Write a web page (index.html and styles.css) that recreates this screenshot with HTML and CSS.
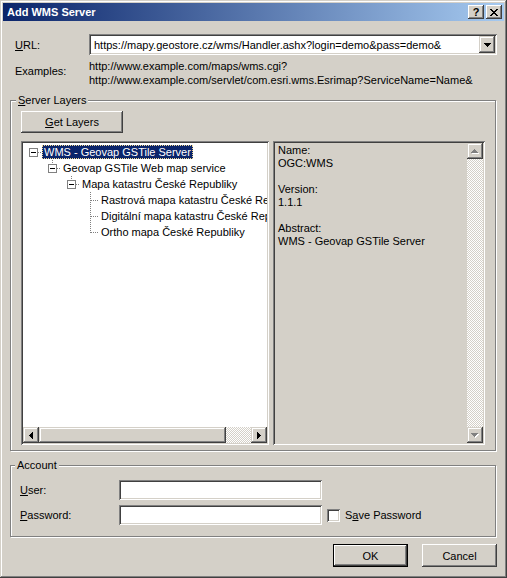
FILE: index.html
```html
<!DOCTYPE html>
<html>
<head>
<meta charset="utf-8">
<link rel="stylesheet" href="styles.css">
</head>
<body>
<div class="window">
  <div class="titlebar">
    <span class="title">Add WMS Server</span>
    <div class="tbuttons">
      <span class="tbtn help">?</span>
      <span class="tbtn"><svg width="8" height="7" viewBox="0 0 8 7" shape-rendering="crispEdges"><path d="M0 0h2v1h1v1h2v-1h1v-1h2v1h-1v1h-1v1h-1v1h1v1h1v1h1v1h-2v-1h-1v-1h-2v1h-1v1h-2v-1h1v-1h1v-1h1v-1h-1v-1h-1v-1h-1z" fill="#000"/></svg></span>
    </div>
  </div>
  <div class="client">
    <div class="url-row">
      <span class="lbl"><u>U</u>RL:</span>
      <div class="combo">
        <span class="combo-text">https://mapy.geostore.cz/wms/Handler.ashx?login=demo&amp;pass=demo&amp;</span>
        <span class="sbtn"><svg width="7" height="4" viewBox="0 0 7 4" shape-rendering="crispEdges"><path d="M0 0h7v1h-1v1h-1v1h-1v1h-1v-1h-1v-1h-1v-1h-1z" fill="#000"/></svg></span>
      </div>
    </div>
    <div class="examples">
      <span class="lbl ex-lbl">Examples:</span>
      <div class="ex-lines">
        <div>http://www.example.com/maps/wms.cgi?</div>
        <div>http://www.example.com/servlet/com.esri.wms.Esrimap?ServiceName=Name&amp;</div>
      </div>
    </div>

    <fieldset class="group layers">
      <legend><u>S</u>erver Layers</legend>
      <button class="btn get"><u>G</u>et Layers</button>
      <div class="panels">
        <div class="tree">
          <div class="tree-body">
            <div class="node l0">
              <svg class="conn" width="13" height="16" viewBox="0 0 13 16" shape-rendering="crispEdges"><rect x="0.5" y="4.5" width="8" height="8" fill="#fff" stroke="#808080"/><path d="M2 8.5h5" stroke="#000"/><path d="M9 8.5h4" stroke="#808080" stroke-dasharray="1 1"/></svg>
              <span class="label sel">WMS - Geovap GSTile Server</span>
            </div>
            <div class="node l1">
              <svg class="conn" width="13" height="16" viewBox="0 0 13 16" shape-rendering="crispEdges"><path d="M4.5 0v4" stroke="#808080" stroke-dasharray="1 1"/><rect x="0.5" y="4.5" width="8" height="8" fill="#fff" stroke="#808080"/><path d="M2 8.5h5" stroke="#000"/><path d="M9 8.5h4" stroke="#808080" stroke-dasharray="1 1"/></svg>
              <span class="label">Geovap GSTile Web map service</span>
            </div>
            <div class="node l2">
              <svg class="conn" width="13" height="16" viewBox="0 0 13 16" shape-rendering="crispEdges"><path d="M4.5 0v4" stroke="#808080" stroke-dasharray="1 1"/><rect x="0.5" y="4.5" width="8" height="8" fill="#fff" stroke="#808080"/><path d="M2 8.5h5" stroke="#000"/><path d="M9 8.5h4" stroke="#808080" stroke-dasharray="1 1"/></svg>
              <span class="label">Mapa katastru České Republiky</span>
            </div>
            <div class="node l3">
              <svg class="conn" width="13" height="16" viewBox="0 0 13 16" shape-rendering="crispEdges"><path d="M4.5 0v16M5 8.5h8" stroke="#808080" stroke-dasharray="1 1"/></svg>
              <span class="label">Rastrová mapa katastru České Republiky</span>
            </div>
            <div class="node l3">
              <svg class="conn" width="13" height="16" viewBox="0 0 13 16" shape-rendering="crispEdges"><path d="M4.5 0v16M5 8.5h8" stroke="#808080" stroke-dasharray="1 1"/></svg>
              <span class="label">Digitální mapa katastru České Republiky</span>
            </div>
            <div class="node l3">
              <svg class="conn" width="13" height="16" viewBox="0 0 13 16" shape-rendering="crispEdges"><path d="M4.5 0v9M5 8.5h8" stroke="#808080" stroke-dasharray="1 1"/></svg>
              <span class="label">Ortho mapa České Republiky</span>
            </div>
          </div>
          <div class="hscroll">
            <span class="sbtn"><svg width="4" height="7" viewBox="0 0 4 7" shape-rendering="crispEdges"><path d="M0 3h1v-1h1v-1h1v-1h1v7h-1v-1h-1v-1h-1v-1h-1z" fill="#000"/></svg></span>
            <span class="thumb-h"></span>
            <span class="track"></span>
            <span class="sbtn"><svg width="4" height="7" viewBox="0 0 4 7" shape-rendering="crispEdges"><path d="M0 0h1v1h1v1h1v1h1v1h-1v1h-1v1h-1v1h-1z" fill="#000"/></svg></span>
          </div>
        </div>
        <div class="info">
          <div class="info-text">
            <div>Name:</div>
            <div>OGC:WMS</div>
            <div class="blank"></div>
            <div>Version:</div>
            <div>1.1.1</div>
            <div class="blank"></div>
            <div>Abstract:</div>
            <div>WMS - Geovap GSTile Server</div>
          </div>
          <div class="vscroll">
            <span class="sbtn"><svg width="8" height="5" viewBox="0 0 8 5" shape-rendering="crispEdges"><path d="M4 1h1v1h1v1h1v1h1v1h-7v-1h1v-1h1v-1h1z" fill="#fff"/><path d="M3 0h1v1h1v1h1v1h1v1h-7v-1h1v-1h1v-1h1z" fill="#808080"/></svg></span>
            <span class="track"></span>
            <span class="sbtn"><svg width="8" height="5" viewBox="0 0 8 5" shape-rendering="crispEdges"><path d="M1 1h7v1h-1v1h-1v1h-1v1h-1v-1h-1v-1h-1v-1h-1z" fill="#fff"/><path d="M0 0h7v1h-1v1h-1v1h-1v1h-1v-1h-1v-1h-1v-1h-1z" fill="#808080"/></svg></span>
          </div>
        </div>
      </div>
    </fieldset>

    <fieldset class="group account">
      <legend>Account</legend>
      <div class="field-row">
        <span class="flbl"><u>U</u>ser:</span>
        <span class="input"></span>
      </div>
      <div class="field-row">
        <span class="flbl"><u>P</u>assword:</span>
        <span class="input"></span>
        <span class="check"></span>
        <span class="check-lbl">S<u>a</u>ve Password</span>
      </div>
    </fieldset>

    <div class="actions">
      <button class="btn dlg default">OK</button>
      <button class="btn dlg">Cancel</button>
    </div>
  </div>
</div>
</body>
</html>
```

FILE: styles.css
```css
* { box-sizing: border-box; }
html, body { margin: 0; padding: 0; }
body {
  font-family: "Liberation Sans", Arial, sans-serif;
  font-size: 11px;
  color: #000;
  background: #d4d0c8;
  width: 507px;
  height: 578px;
  overflow: hidden;
}
u { text-decoration: underline; text-underline-offset: 1px; }

.window {
  width: 507px;
  height: 578px;
  background: #d4d0c8;
  padding: 3px;
  display: flex;
  flex-direction: column;
  box-shadow: inset -1px -1px #404040, inset 1px 1px #d4d0c8, inset -2px -2px #808080, inset 2px 2px #fff;
}

.titlebar {
  height: 18px;
  flex: none;
  display: flex;
  align-items: center;
  background: linear-gradient(to right, #0a246a, #a6caf0);
  padding: 0 2px;
}
.title {
  flex: 1;
  color: #fff;
  font-weight: bold;
  font-size: 11px;
  padding-left: 2px;
}
.tbuttons { display: flex; gap: 2px; }
.tbtn {
  width: 16px;
  height: 14px;
  background: #d4d0c8;
  display: flex;
  align-items: center;
  justify-content: center;
  box-shadow: inset -1px -1px #404040, inset 1px 1px #fff, inset -2px -2px #808080, inset 2px 2px #d4d0c8;
}
.tbtn.help { font-weight: bold; font-size: 11px; line-height: 14px; }

.client {
  flex: 1;
  display: flex;
  flex-direction: column;
  padding: 13px 7px 0 7px;
}

.raised {
  box-shadow: inset -1px -1px #404040, inset 1px 1px #fff, inset -2px -2px #808080, inset 2px 2px #d4d0c8;
}

.url-row { display: flex; align-items: center; height: 21px; }
.lbl { width: 79px; padding-left: 5px; flex: none; }
.combo {
  flex: 1;
  height: 21px;
  background: #fff;
  display: flex;
  align-items: center;
  padding: 2px;
  box-shadow: inset 1px 1px #808080, inset -1px -1px #fff, inset 2px 2px #404040, inset -2px -2px #d4d0c8;
}
.combo-text { flex: 1; padding-left: 3px; white-space: nowrap; overflow: hidden; }
.combo .sbtn { height: 17px; }

.sbtn {
  width: 16px;
  height: 16px;
  flex: none;
  background: #d4d0c8;
  display: flex;
  align-items: center;
  justify-content: center;
  box-shadow: inset -1px -1px #404040, inset 1px 1px #d4d0c8, inset -2px -2px #808080, inset 2px 2px #fff;
}

.examples { display: flex; margin-top: 4px; line-height: 14px; }
.ex-lbl { padding-top: 5px; }
.ex-lines { white-space: nowrap; }

.group {
  margin: 7px 1px 0 0;
  border: 1px solid #808080;
  box-shadow: inset 1px 1px #fff, 1px 1px #fff;
  min-width: 0;
}
.group legend {
  line-height: 13px;
  padding: 0 2px;
  margin-left: -5px;
  background: #d4d0c8;
}
.layers { padding: 4px 10px 5px 10px; }

.btn {
  font-family: inherit;
  font-size: 11px;
  color: #000;
  background: #d4d0c8;
  border: none;
  padding: 0;
  box-shadow: inset -1px -1px #404040, inset 1px 1px #fff, inset -2px -2px #808080, inset 2px 2px #d4d0c8;
}
.btn.get { display: block; width: 102px; height: 22px; }

.panels { display: flex; gap: 4px; margin-top: 8px; }
.tree {
  width: 248px;
  height: 304px;
  flex: none;
  background: #fff;
  padding: 2px;
  display: flex;
  flex-direction: column;
  box-shadow: inset 1px 1px #808080, inset -1px -1px #fff, inset 2px 2px #404040, inset -2px -2px #d4d0c8;
}
.tree-body { flex: 1; overflow: hidden; padding-top: 1px; white-space: nowrap; }
.node { display: flex; align-items: center; height: 16px; }
.conn { flex: none; display: block; }
.l0 { padding-left: 6px; }
.l1 { padding-left: 25px; }
.l2 { padding-left: 44px; }
.l3 { padding-left: 63px; }
.label { line-height: 14px; padding: 0 2px; }
.label.sel {
  background: #0a246a;
  color: #fff;
  outline: 1px dotted #f0d890;
  outline-offset: -1px;
}

.hscroll { height: 16px; display: flex; flex: none; }
.thumb-h {
  width: 187px;
  background: #d4d0c8;
  box-shadow: inset -1px -1px #404040, inset 1px 1px #d4d0c8, inset -2px -2px #808080, inset 2px 2px #fff;
}
.track {
  flex: 1;
  background: repeating-conic-gradient(#fff 0 25%, #d4d0c8 0 50%) 0 0 / 2px 2px;
}

.info {
  width: 212px;
  height: 304px;
  flex: none;
  background: #d4d0c8;
  padding: 2px;
  display: flex;
  box-shadow: inset 1px 1px #808080, inset -1px -1px #fff, inset 2px 2px #404040, inset -2px -2px #d4d0c8;
}
.info-text { flex: 1; padding: 1px 3px; line-height: 13px; }
.blank { height: 13px; }
.vscroll { width: 16px; display: flex; flex-direction: column; }

.account { margin-top: 8px; padding: 8px 9px 11px 9px; }
.field-row { display: flex; align-items: center; height: 20px; }
.field-row + .field-row { margin-top: 5px; }
.flbl { width: 99px; flex: none; }
.input {
  width: 203px;
  height: 20px;
  background: #fff;
  box-shadow: inset 1px 1px #808080, inset -1px -1px #fff, inset 2px 2px #404040, inset -2px -2px #d4d0c8;
}
.check {
  width: 13px;
  height: 13px;
  margin-left: 5px;
  background: #fff;
  box-shadow: inset 1px 1px #808080, inset -1px -1px #fff, inset 2px 2px #404040, inset -2px -2px #d4d0c8;
}
.check-lbl { margin-left: 5px; }

.actions { display: flex; justify-content: flex-end; gap: 14px; margin-top: 7px; }
.btn.dlg { width: 75px; height: 23px; }
.btn.default {
  box-shadow: inset 0 0 0 1px #000, inset -2px -2px #404040, inset 2px 2px #fff, inset -3px -3px #808080;
}
```
